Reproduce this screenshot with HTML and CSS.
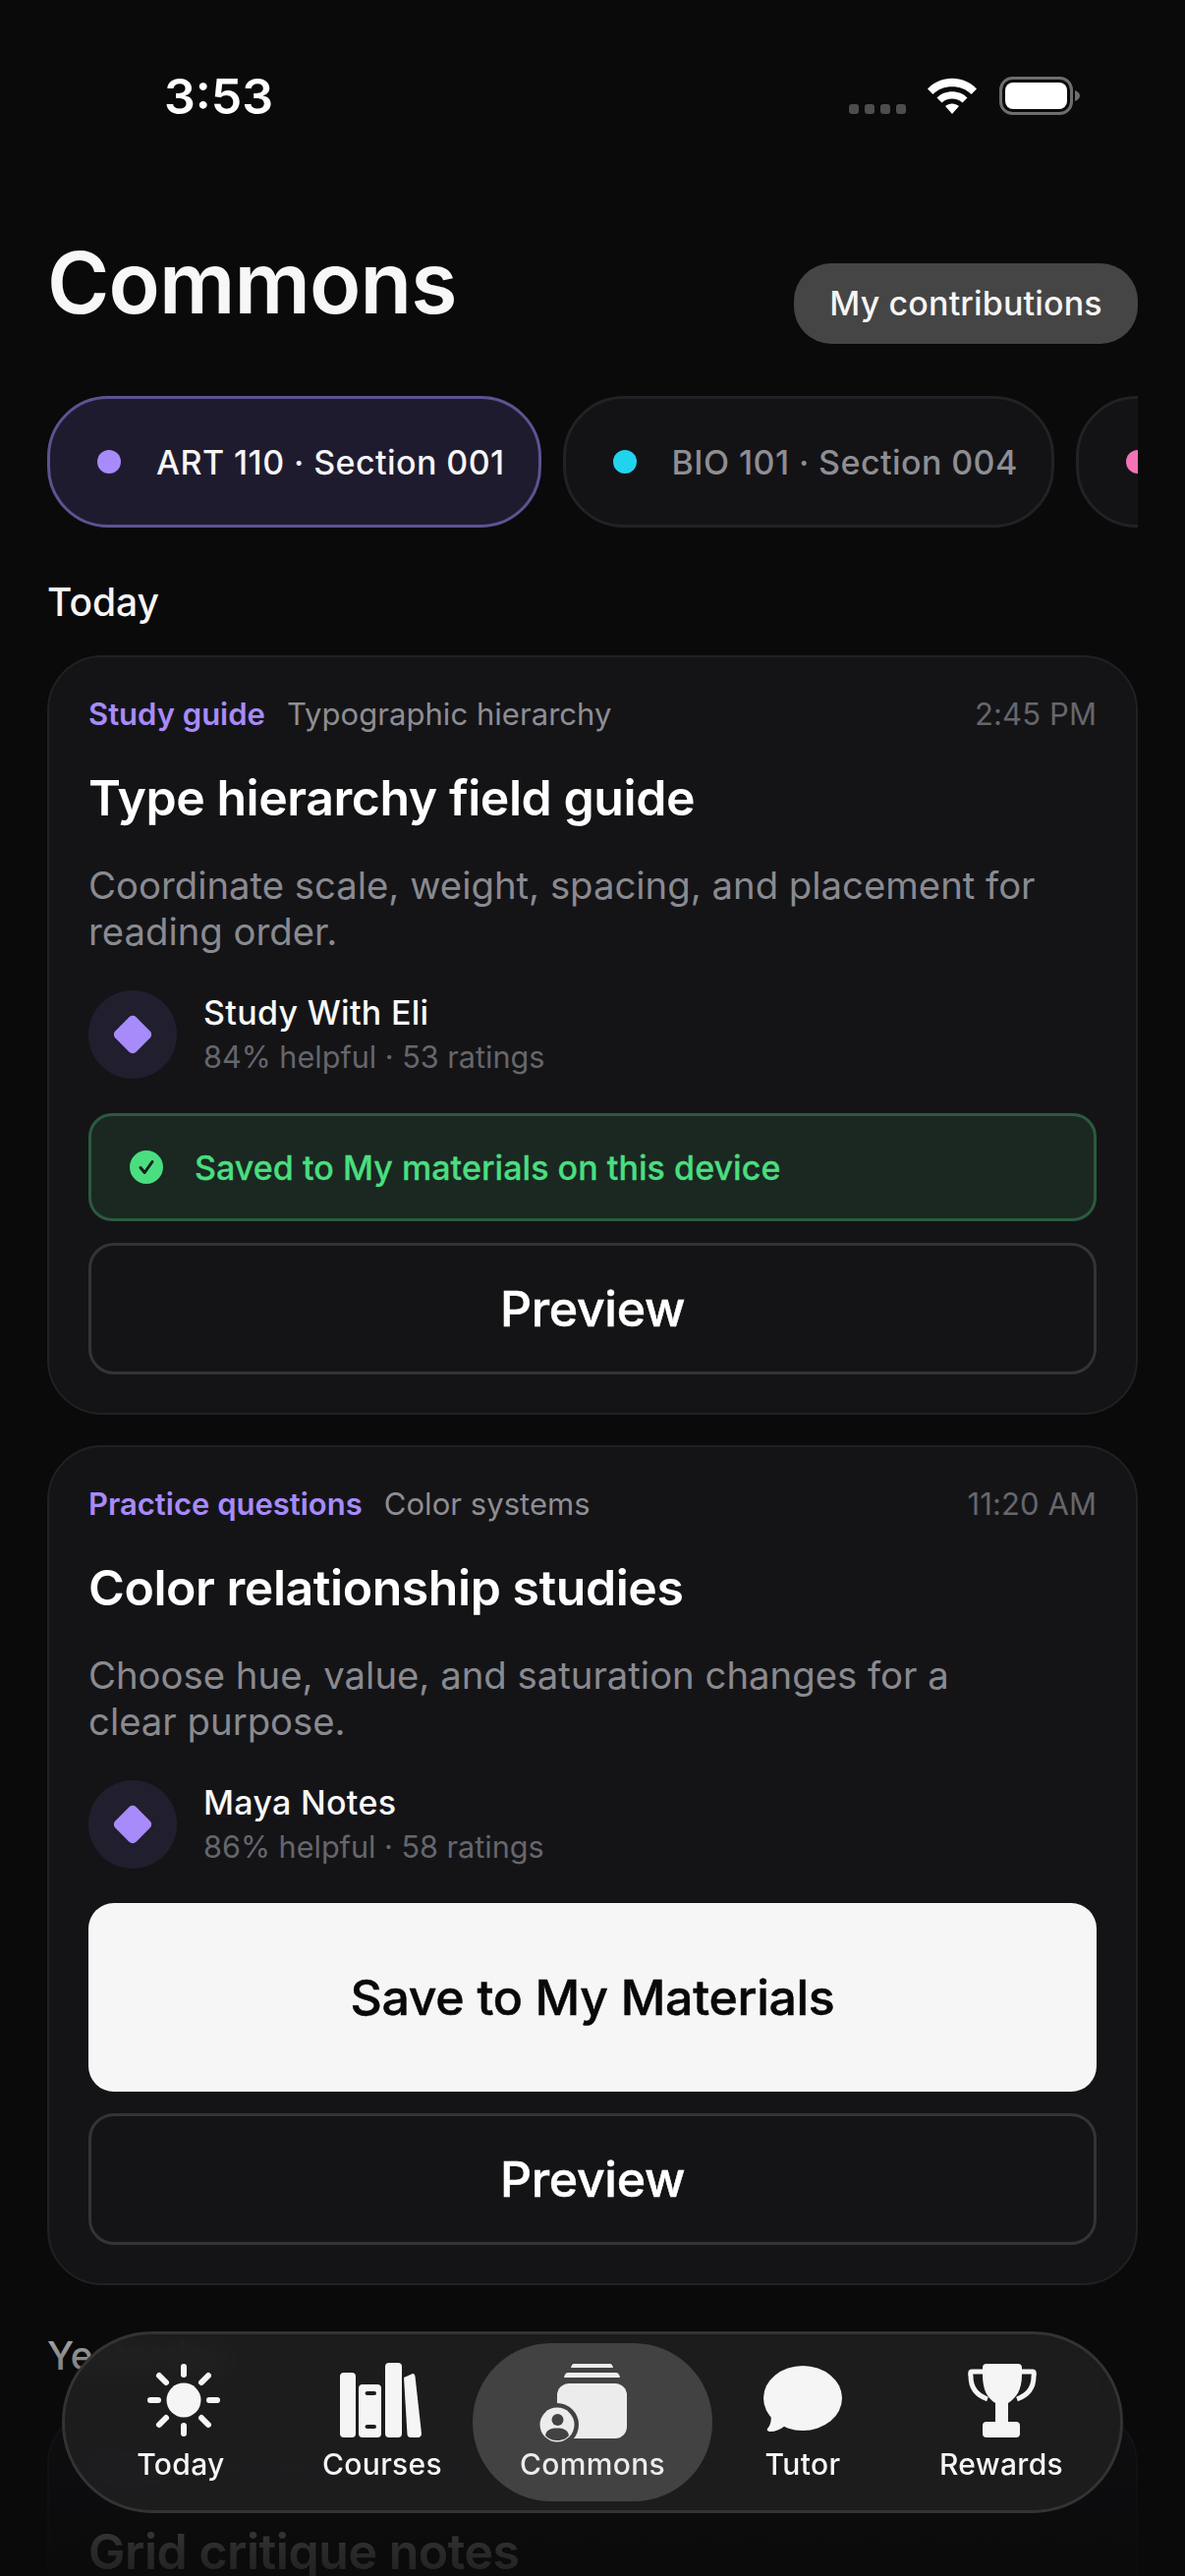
FILE: index.html
```html
<!DOCTYPE html>
<html lang="en">
<head>
<meta charset="utf-8">
<title>Commons</title>
<link rel="stylesheet" href="styles.css">
</head>
<body>
<div class="phone">
  <div class="status">
    <span class="clock">3:53</span>
    <svg class="status-icons" width="236" height="40" viewBox="0 0 236 40">
      <g fill="#4d4d4f">
        <rect x="0" y="28" width="10" height="10" rx="3"/>
        <rect x="16" y="28" width="10" height="10" rx="3"/>
        <rect x="32" y="28" width="10" height="10" rx="3"/>
        <rect x="48" y="28" width="10" height="10" rx="3"/>
      </g>
      <path d="M80 12.500C93 -2 117 -2 130 12.500L124.500 18C115 7.500 95 7.500 85.500 18Z" fill="#fff"/>
      <path d="M89.500 21.500C97 13 113 13 120.500 21.500L115.500 26.500C110 21 100 21 94.500 26.500Z" fill="#fff"/>
      <path d="M98 30C102 26.500 108 26.500 112 30L105 38Z" fill="#fff"/>
      <rect x="154.500" y="1.500" width="72" height="36" rx="12" fill="none" stroke="#6e6e70" stroke-width="3"/>
      <rect x="159" y="6" width="63" height="27" rx="8" fill="#fff"/>
      <path d="M230 14C233 15 235 17 235 19.500C235 22 233 24 230 25Z" fill="#6e6e70"/>
    </svg>
  </div>

  <header class="head">
    <h1 class="title">Commons</h1>
    <button class="contrib">My contributions</button>
  </header>

  <div class="chips">
    <div class="chip chip-on"><i class="dot dot-violet"></i>ART 110 · Section 001</div>
    <div class="chip"><i class="dot dot-cyan"></i>BIO 101 · Section 004</div>
    <div class="chip chip-more"><i class="dot dot-pink"></i></div>
  </div>

  <h2 class="day">Today</h2>
  <article class="card">
    <div class="meta"><span class="kind">Study guide</span><span class="topic">Typographic hierarchy</span><span class="time">2:45 PM</span></div>
    <h3 class="card-title">Type hierarchy field guide</h3>
    <p class="desc">Coordinate scale, weight, spacing, and placement for reading order.</p>
    <div class="author">
      <div class="avatar"><i class="diamond"></i></div>
      <div class="who"><div class="name">Study With Eli</div><div class="rating">84% helpful · 53 ratings</div></div>
    </div>
    <div class="actions">
      <div class="saved">
        <svg width="34" height="34" viewBox="0 0 34 34"><circle cx="17" cy="17" r="17" fill="#4ade80"/><path d="M11 17.500L15.200 22.500L23 11.500" fill="none" stroke="#14201a" stroke-width="3" stroke-linecap="round" stroke-linejoin="round"/></svg>
        <span>Saved to My materials on this device</span>
      </div>
      <button class="btn btn-line">Preview</button>
    </div>
  </article>

  <article class="card">
    <div class="meta"><span class="kind">Practice questions</span><span class="topic">Color systems</span><span class="time">11:20 AM</span></div>
    <h3 class="card-title">Color relationship studies</h3>
    <p class="desc">Choose hue, value, and saturation changes for a clear purpose.</p>
    <div class="author">
      <div class="avatar"><i class="diamond"></i></div>
      <div class="who"><div class="name">Maya Notes</div><div class="rating">86% helpful · 58 ratings</div></div>
    </div>
    <div class="actions">
      <button class="btn btn-solid">Save to My Materials</button>
      <button class="btn btn-line">Preview</button>
    </div>
  </article>

  <h2 class="day">Yesterday</h2>
  <article class="card">
    <div class="meta"><span class="kind">Notes</span><span class="topic">Grid and alignment</span><span class="time">4:10 PM</span></div>
    <h3 class="card-title">Grid critique notes</h3>
  </article>

  <div class="fade"></div>

  <nav class="tabs">
    <div class="tab">
      <svg class="icon" viewBox="-48 -40 90 84" fill="#f5f5f5">
        <circle r="17.500"/>
        <g stroke="#f5f5f5" stroke-width="6" stroke-linecap="round">
          <path d="M0 -34V-26M0 26V34M-34 0H-26M26 0H34M-25 -25L-18 -18M18 18L25 25M25 -25L18 -18M-18 18L-25 25"/>
        </g>
      </svg>
      <span>Today</span>
    </div>
    <div class="tab">
      <svg class="icon" viewBox="0 0 90 84" fill="#f5f5f5">
        <rect x="2" y="12" width="16" height="66" rx="4"/>
        <path d="M25 24H40Q44 24 44 28V74Q44 78 40 78H25Q21 78 21 74V28Q21 24 25 24ZM30 31Q27.500 31 27.500 33Q27.500 35 30 35H37Q39 35 39 33Q39 31 37 31ZM30 65Q27.500 65 27.500 67Q27.500 69 30 69H37Q39 69 39 67Q39 65 37 65Z" fill-rule="evenodd"/>
        <rect x="48" y="2" width="17" height="76" rx="4"/>
        <path d="M67 17L76 13Q78 13 78.500 16L85 74Q85 77 82 78L74 78Q71 78 70.500 75Z"/>
      </svg>
      <span>Courses</span>
    </div>
    <div class="tab tab-on">
      <svg class="icon" viewBox="0 0 90 84" fill="#ececec">
        <path d="M26 3H63Q65 3 66 7H23Q24 3 26 3Z"/>
        <path d="M20 12H69Q72 12 73 17H16Q17 12 20 12Z"/>
        <rect x="9" y="23" width="71" height="56" rx="12"/>
        <circle cx="9" cy="65" r="22" fill="#424242"/>
        <circle cx="9" cy="65" r="17.500"/>
        <circle cx="9.500" cy="60" r="6" fill="#424242"/>
        <path d="M-3 76C-2 70 3 68.500 9 68.500C15 68.500 20 70 21 76C18 79.500 14 81 9 81C4 81 0 79.500 -3 76Z" fill="#424242"/>
      </svg>
      <span>Commons</span>
    </div>
    <div class="tab">
      <svg class="icon" viewBox="0 0 90 84" fill="#f5f5f5">
        <ellipse cx="45" cy="38" rx="40" ry="33"/>
        <path d="M12 50C14 60 12 66 9 69C8 71 10 72 12 72C17 72 22 70 27 66Z"/>
      </svg>
      <span>Tutor</span>
    </div>
    <div class="tab">
      <svg class="icon" viewBox="0 0 90 84" fill="#f5f5f5">
        <path d="M30 3H62Q66 3 66 7V14C66 30 60 38 52 43V62H39V43C31 38 26 30 26 14V7Q26 3 30 3Z"/>
        <rect x="26" y="62" width="38" height="16" rx="4"/>
        <path d="M26 11H15Q13 11 14 16C14 28 20 35 31 39M66 11H77Q79 11 78 16C78 28 72 35 61 39" fill="none" stroke="#f5f5f5" stroke-width="5" stroke-linejoin="round"/>
      </svg>
      <span>Rewards</span>
    </div>
  </nav>
</div>
</body>
</html>
```
FILE: styles.css
```css
* { box-sizing: border-box; }
html, body { margin: 0; background: #0a0a0b; }
body { font-family: "Inter", "Noto Sans", sans-serif; color: #f5f5f5; }
.phone { position: relative; width: 1206px; height: 2622px; overflow: hidden; background: #0a0a0b; padding: 0 48px; }

.status { display: flex; justify-content: space-between; align-items: flex-start; height: 190px; padding: 68px 58px 0 120px; }
.clock { font-size: 50px; line-height: 60px; font-weight: 600; color: #fff; margin-left: -1px; }
.status-icons { margin-top: 10px; display: block; }

.head { display: flex; justify-content: space-between; align-items: flex-start; height: 213px; }
.title { margin: 46px 0 0; font-size: 86px; line-height: 104px; font-weight: 600; letter-spacing: -.9px; color: #f7f7f7; }
.contrib { margin-top: 78px; width: 350px; height: 82px; border: 0; border-radius: 38px; background: #454545; color: #f5f5f5; font: 500 34px/40px "Inter", sans-serif; letter-spacing: .15px; }

.chips { display: flex; gap: 22px; overflow: hidden; width: 1110px; }
.chip { flex: none; display: flex; align-items: center; gap: 36px; height: 134px; padding: 0 34px 0 48px; border: 3px solid #222226; border-radius: 62px; background: #131316; color: #8e8e93; font-size: 34px; font-weight: 500; letter-spacing: .42px; white-space: nowrap; }
.chip-on { background: #1f1b2e; border-color: #5f5292; color: #f5f5f5; }
.chip-more { width: 200px; }
.dot { flex: none; width: 24px; height: 24px; border-radius: 50%; }
.dot-violet { background: #a78bfa; }
.dot-cyan { background: #22d3ee; }
.dot-pink { background: #f472b6; }

.day { margin: 50px 0 29px; font-size: 39px; line-height: 50px; font-weight: 500; color: #f5f5f5; }
.chips + .day { margin-top: 51px; }
.card + .day { margin-top: 47px; }

.card { display: flex; flex-direction: column; margin-bottom: 31px; padding: 38px 40px 39px; border: 2px solid #212125; border-radius: 56px; background: #141417; }
.meta { display: flex; align-items: center; height: 40px; font-size: 31px; line-height: 40px; }
.kind { color: #a78bfa; font-weight: 600; margin-right: 22px; }
.topic { color: #8e8e93; letter-spacing: .05px; }
.time { margin-left: auto; color: #66666c; letter-spacing: .1px; }
.card-title { margin: 33px 0 0; font-size: 50px; line-height: 64px; font-weight: 600; letter-spacing: -.45px; color: #fff; }
.desc { margin: 34px 0 0; font-size: 38.300px; line-height: 47px; color: #8a8a90; width: 970px; }
.author { display: flex; align-items: center; gap: 27px; margin-top: 36px; }
.avatar { display: flex; align-items: center; justify-content: center; width: 90px; height: 90px; border-radius: 50%; background: #211f2e; }
.diamond { width: 30px; height: 30px; border-radius: 5px; background: #a78bfa; transform: rotate(45deg); }
.name { font-size: 34px; line-height: 44px; font-weight: 500; letter-spacing: .3px; color: #f8f8f8; }
.rating { margin-top: 2px; font-size: 30.600px; line-height: 42px; color: #66666c; }
.actions { display: flex; flex-direction: column; gap: 22px; margin-top: 35px; }
.saved { display: flex; align-items: center; gap: 32px; height: 110px; padding: 0 39px; border: 3px solid #2c5a3e; border-radius: 24px; background: #1a2821; color: #4ade80; font-size: 34px; font-weight: 500; letter-spacing: .05px; -webkit-text-stroke: .3px currentColor; }
.btn { display: block; width: 100%; border-radius: 26px; font: 500 50px/60px "Inter", sans-serif; letter-spacing: -.3px; -webkit-text-stroke: .5px currentColor; }
.btn-line { height: 134px; border: 3px solid #333338; background: transparent; color: #fff; }
.btn-solid { height: 192px; border: 0; background: #f6f6f6; color: #09090b; }

.fade { position: absolute; left: 0; right: 0; top: 2330px; height: 292px; background: linear-gradient(to bottom, rgba(10,10,11,0) 0, rgba(10,10,11,.45) 68px, rgba(10,10,11,.87) 267px, rgba(10,10,11,.9) 100%); }

.tabs { position: absolute; left: 63px; top: 2373px; width: 1080px; height: 185px; display: grid; grid-template-columns: 226px 184px 244px 184px 220px; align-items: center; padding: 0 0 0 5px; border: 3px solid #333335; border-radius: 92px; background: rgba(30,30,31,.9); backdrop-filter: blur(14px); }
.tab { display: flex; flex-direction: column; align-items: center; height: 161px; padding-top: 18px; font-size: 30px; line-height: 36px; font-weight: 500; color: #f5f5f5; letter-spacing: .35px; }
.tab span { margin-top: 3px; }
.tab-on { border-radius: 80px; background: #424242; color: #ececec; }
.icon { display: block; flex: none; width: 90px; height: 84px; overflow: visible; }
```
